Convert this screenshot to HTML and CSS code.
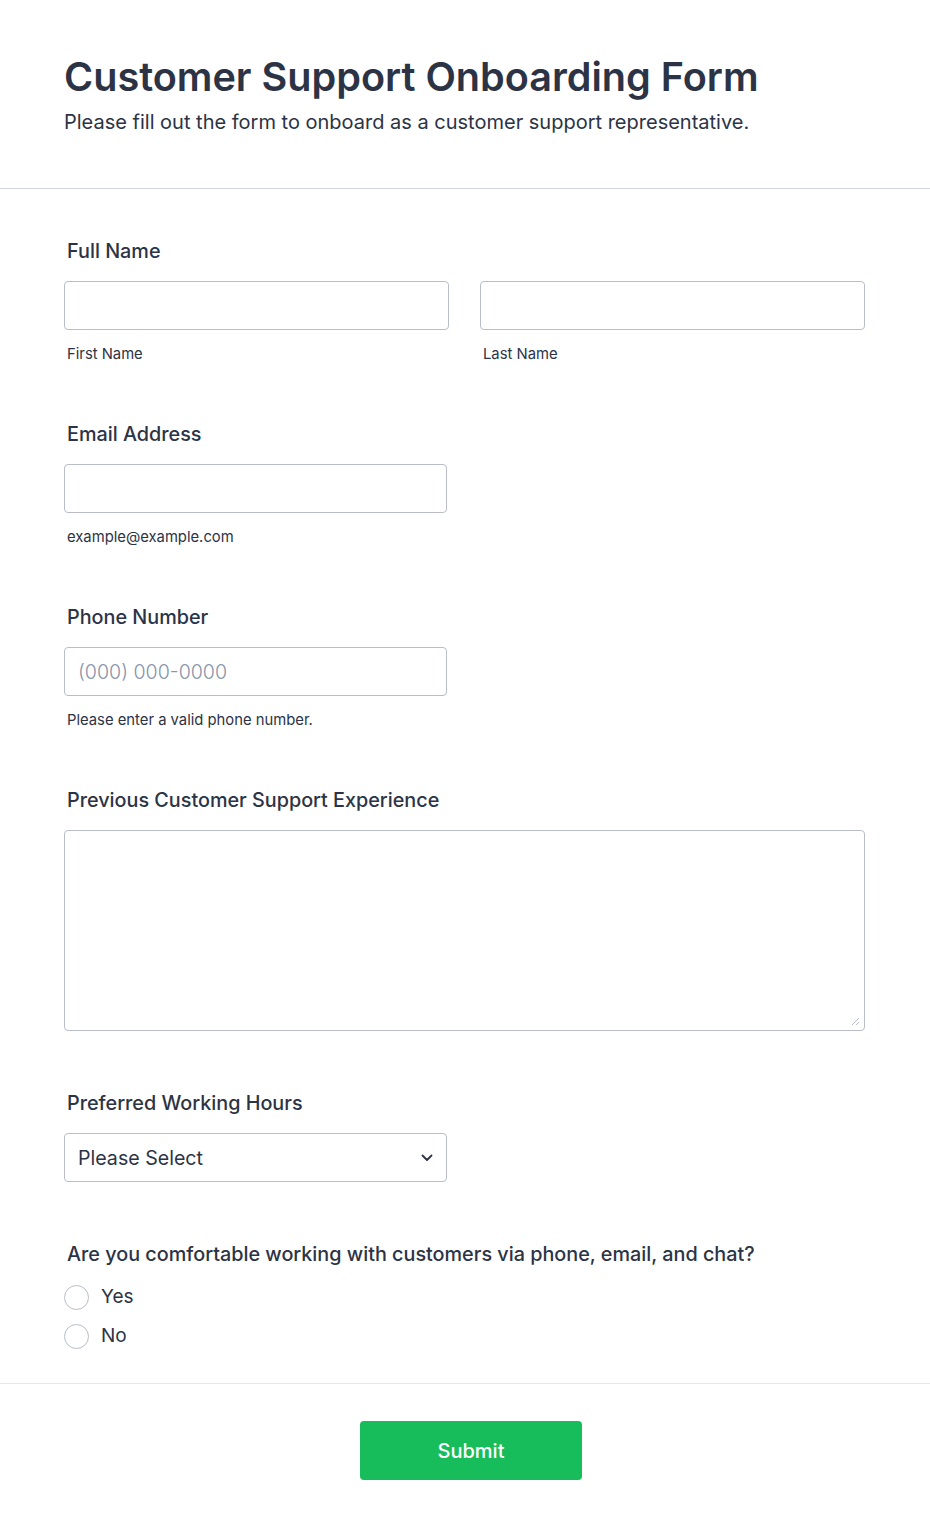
FILE: index.html
```html
<!DOCTYPE html>
<html lang="en">
<head>
<meta charset="utf-8">
<title>Customer Support Onboarding Form</title>
<link rel="stylesheet" href="styles.css">
</head>
<body>
<form class="form">
  <header class="form-header">
    <h1 class="form-title">Customer Support Onboarding Form</h1>
    <p class="form-subtitle">Please fill out the form to onboard as a customer support representative.</p>
  </header>

  <div class="fields">
    <div class="field">
      <label class="field-label">Full Name</label>
      <div class="name-row">
        <div class="name-col">
          <input class="input" type="text">
          <span class="sub-label">First Name</span>
        </div>
        <div class="name-col">
          <input class="input" type="text">
          <span class="sub-label">Last Name</span>
        </div>
      </div>
    </div>

    <div class="field">
      <label class="field-label">Email Address</label>
      <div class="half">
        <input class="input" type="email">
        <span class="sub-label">example@example.com</span>
      </div>
    </div>

    <div class="field">
      <label class="field-label">Phone Number</label>
      <div class="half">
        <input class="input" type="tel" placeholder="(000) 000-0000">
        <span class="sub-label">Please enter a valid phone number.</span>
      </div>
    </div>

    <div class="field">
      <label class="field-label">Previous Customer Support Experience</label>
      <div class="textarea-wrap">
        <textarea class="textarea"></textarea>
        <svg class="resize-grip" width="10" height="10" viewBox="0 0 10 10"><path d="M9 2 L2 9 M9 6 L6 9" fill="none" stroke="#b8bdc9" stroke-width="1"/></svg>
      </div>
    </div>

    <div class="field field-after-wide">
      <label class="field-label">Preferred Working Hours</label>
      <div class="select half">
        <span class="select-text">Please Select</span>
        <svg class="chevron" width="12" height="8" viewBox="0 0 12 8"><path d="M1.5 1.5 L6 6 L10.5 1.5" fill="none" stroke="#2c3345" stroke-width="1.8" stroke-linecap="round" stroke-linejoin="round"/></svg>
      </div>
    </div>

    <div class="field field-after-wide">
      <label class="field-label">Are you comfortable working with customers via phone, email, and chat?</label>
      <div class="radios">
        <label class="radio-row"><span class="radio"></span><span class="radio-text">Yes</span></label>
        <label class="radio-row"><span class="radio"></span><span class="radio-text">No</span></label>
      </div>
    </div>
  </div>

  <div class="form-footer">
    <button class="submit" type="button">Submit</button>
  </div>
</form>
</body>
</html>
```

FILE: styles.css
```css
* { box-sizing: border-box; }

html, body {
  margin: 0;
  padding: 0;
  background: #ffffff;
}

body {
  font-family: Inter, "Noto Sans", Arial, sans-serif;
  color: #2c3345;
  width: 930px;
}

.form {
  margin: 0;
}

.form-header {
  padding: 53px 64px 54px 64px;
  border-bottom: 1px solid #d3d6de;
}

.form-title {
  margin: 0;
  font-size: 39.6px;
  line-height: 48px;
  font-weight: 600;
  color: #2c3345;
}

.form-subtitle {
  margin: 9px 0 0 0;
  font-size: 20px;
  line-height: 24px;
  font-weight: 400;
  color: #2c3345;
}

.fields {
  padding: 50px 64px 35px 64px;
  display: flex;
  flex-direction: column;
  gap: 59px;
}

.field {
  display: flex;
  flex-direction: column;
}

.field-after-wide { margin-top: 1px; }

.field-label {
  font-size: 19.8px;
  line-height: 24px;
  font-weight: 500;
  padding-left: 3px;
  margin-bottom: 18px;
  color: #2c3345;
}

.name-row {
  display: flex;
  gap: 31px;
}

.name-col {
  width: 385px;
  display: flex;
  flex-direction: column;
}

.half {
  width: 383px;
  display: flex;
  flex-direction: column;
}

.input {
  display: block;
  width: 100%;
  height: 49px;
  border: 1px solid #b8bdc9;
  border-radius: 4px;
  background: #fff;
  padding: 0 13px;
  font-family: Inter, "Noto Sans", Arial, sans-serif;
  font-size: 19.6px;
  color: #2c3345;
  outline: none;
}

.input::placeholder {
  color: #8894ab;
  font-weight: 300;
}

.sub-label {
  display: block;
  margin-top: 15px;
  padding-left: 3px;
  font-size: 14.8px;
  line-height: 18px;
  color: #2c3345;
}

.textarea-wrap {
  position: relative;
  width: 801px;
  height: 201px;
}

.textarea {
  display: block;
  width: 801px;
  height: 201px;
  border: 1px solid #b8bdc9;
  border-radius: 4px;
  background: #fff;
  margin: 0;
  padding: 10px 13px;
  font-family: Inter, "Noto Sans", Arial, sans-serif;
  font-size: 18px;
  outline: none;
  resize: none;
}

.resize-grip {
  position: absolute;
  right: 5px;
  bottom: 5px;
  display: block;
}

.select {
  height: 49px;
  border: 1px solid #b8bdc9;
  border-radius: 4px;
  background: #fff;
  flex-direction: row;
  align-items: center;
  justify-content: space-between;
  padding: 0 13px;
}

.select-text {
  font-size: 19.6px;
  line-height: 24px;
  color: #2c3345;
}

.chevron {
  display: block;
}

.radios {
  display: flex;
  flex-direction: column;
  gap: 15px;
  margin-top: 1px;
}

.radio-row {
  display: flex;
  align-items: center;
  gap: 12px;
  height: 24px;
}

.radio {
  width: 25px;
  height: 25px;
  border: 1px solid #b8bdc9;
  border-radius: 50%;
  background: #fff;
  flex: none;
}

.radio-text {
  font-size: 19px;
  line-height: 24px;
  color: #2c3345;
}

.form-footer {
  border-top: 1px solid #e6e6eb;
  padding: 37px 0 50px 0;
  display: flex;
  justify-content: center;
}

.submit {
  width: 222px;
  height: 59px;
  margin-left: 12px;
  background: #18bd5b;
  color: #ffffff;
  border: none;
  border-radius: 4px;
  font-family: Inter, "Noto Sans", Arial, sans-serif;
  font-size: 20px;
  font-weight: 500;
}
```
